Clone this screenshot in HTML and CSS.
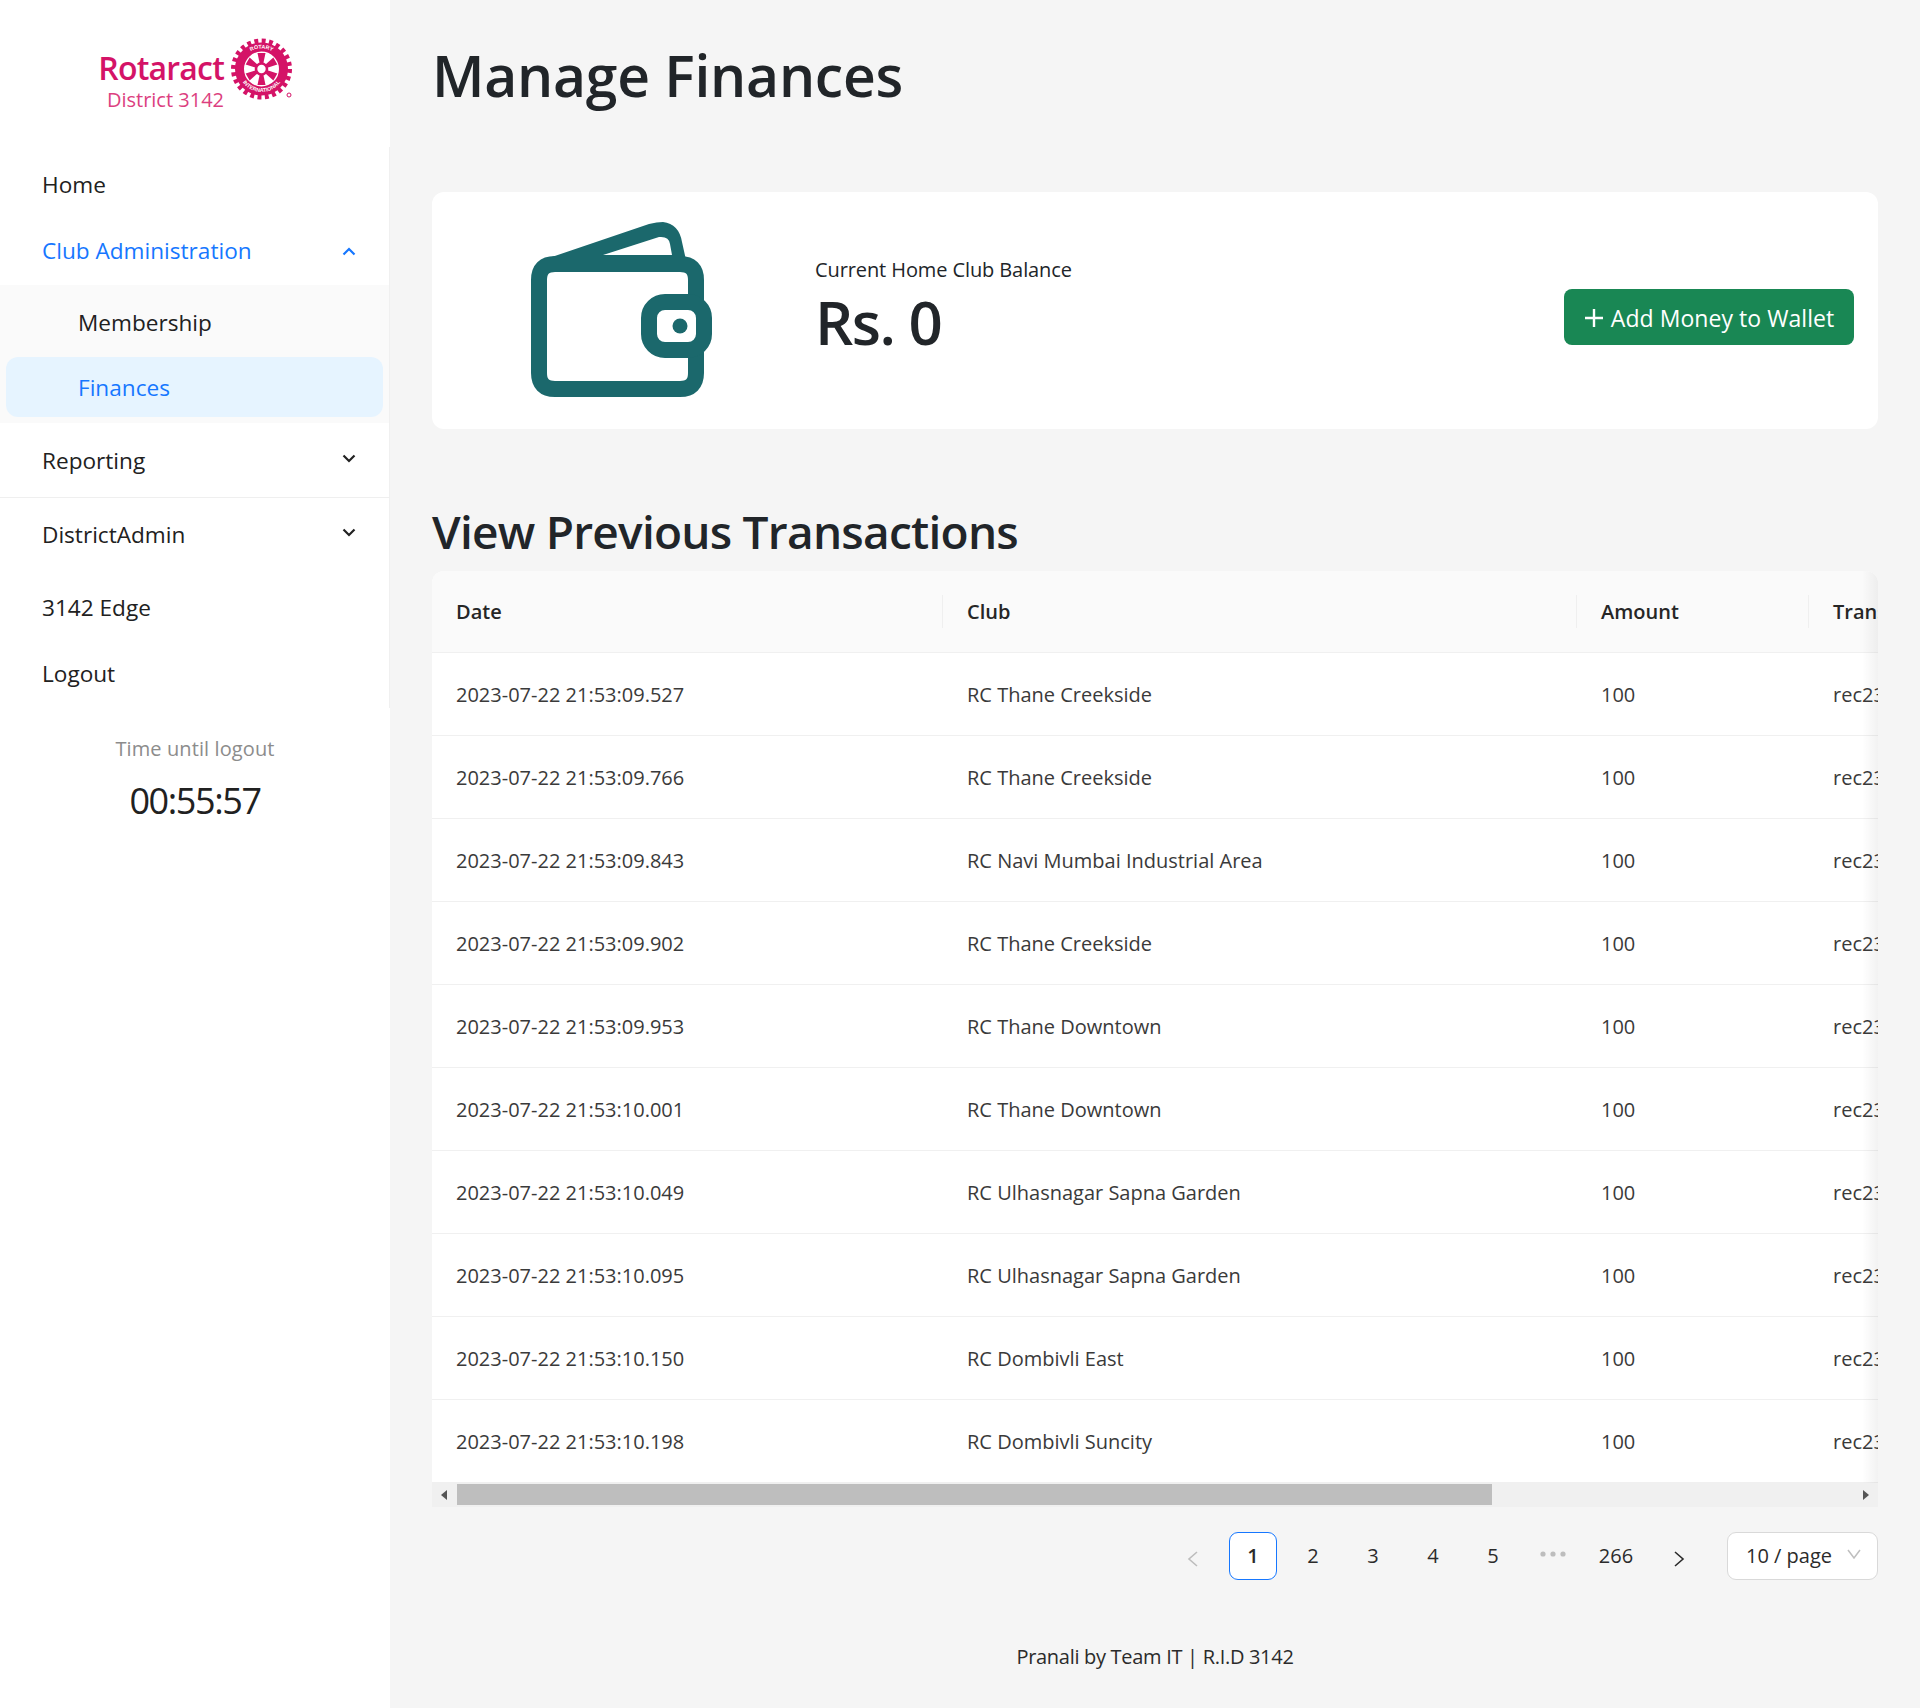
FILE: index.html
```html
<!DOCTYPE html>
<html lang="en">
<head>
  <meta charset="UTF-8" />
  <title>Manage Finances</title>
  <link rel="stylesheet" href="styles.css">
</head>
<body>
  <div class="layout">
    <aside class="sidebar">
      <div class="logo">
        <div class="logo-text">
          <div class="logo-name">Rotaract</div>
          <div class="logo-district">District 3142</div>
        </div>
        <svg class="logo-wheel" width="66" height="66" viewBox="0 0 66 66">
          <defs>
            <path id="arcTop" d="M11 31 A20.500 20.500 0 0 1 52 31"/>
            <path id="arcBottom" d="M8.500 31 A23 23 0 0 0 54.500 31"/>
          </defs>
          <circle cx="31.5" cy="31" r="28" fill="none" stroke="#d41367" stroke-width="5" stroke-dasharray="3.9 3.43"/>
          <circle cx="31.5" cy="31" r="22" fill="none" stroke="#d41367" stroke-width="9"/>
          <g fill="#d41367">
            <path id="spoke" d="M29.800 26 27.500 15H35.500L33.200 26Z"/>
            <path d="M29.800 26 27.500 15H35.500L33.200 26Z" transform="rotate(60 31.5 31)"/>
            <path d="M29.800 26 27.500 15H35.500L33.200 26Z" transform="rotate(120 31.5 31)"/>
            <path d="M29.800 26 27.500 15H35.500L33.200 26Z" transform="rotate(180 31.5 31)"/>
            <path d="M29.800 26 27.500 15H35.500L33.200 26Z" transform="rotate(240 31.5 31)"/>
            <path d="M29.800 26 27.500 15H35.500L33.200 26Z" transform="rotate(300 31.5 31)"/>
          </g>
          <circle cx="31.5" cy="31" r="5.5" fill="#fff" stroke="#d41367" stroke-width="2.6"/>
          <text class="wheel-text"><textPath href="#arcTop" startOffset="50%" text-anchor="middle">ROTARY</textPath></text>
          <text class="wheel-text"><textPath href="#arcBottom" startOffset="50%" text-anchor="middle">INTERNATIONAL</textPath></text>
          <circle cx="59" cy="57" r="2" fill="none" stroke="#d41367" stroke-width="1"/>
        </svg>
      </div>

      <nav class="menu">
        <a class="menu-item home-item">Home</a>
        <a class="menu-item open">Club Administration
          <svg class="chevron" width="14" height="9" viewBox="0 0 14 9"><path d="M1.5 7.5 7 2l5.5 5.5"/></svg>
        </a>
        <div class="submenu">
          <a class="menu-item sub-item">Membership</a>
          <a class="menu-item sub-item active">Finances</a>
        </div>
        <a class="menu-item reporting">Reporting
          <svg class="chevron" width="14" height="9" viewBox="0 0 14 9"><path d="M1.5 1.5 7 7l5.5-5.5"/></svg>
        </a>
        <div class="divider"></div>
        <a class="menu-item">DistrictAdmin
          <svg class="chevron" width="14" height="9" viewBox="0 0 14 9"><path d="M1.5 1.5 7 7l5.5-5.5"/></svg>
        </a>
        <a class="menu-item edge">3142 Edge</a>
        <a class="menu-item logout">Logout</a>
      </nav>

      <div class="timer">
        <div class="timer-label">Time until logout</div>
        <div class="timer-value">00:55:57</div>
      </div>
    </aside>

    <main class="content">
      <h1>Manage Finances</h1>

      <section class="balance-card">
        <svg class="wallet" width="190" height="182" viewBox="0 0 190 182">
          <path d="M12 38 118 2Q126 0 132 0 148 2 151 20L155 38Z" fill="#1b686c"/>
          <path d="M72 33 128 15Q138 14 139 22L141 33Z" fill="#fff"/>
          <path d="M165 80V58Q165 42 149 42H24Q8 42 8 58V151Q8 167 24 167H149Q165 167 165 151V130" fill="none" stroke="#1b686c" stroke-width="16"/>
          <rect x="118" y="80" width="55" height="48" rx="16" fill="#fff" stroke="#1b686c" stroke-width="16"/>
          <circle cx="149" cy="104" r="7.5" fill="#1b686c"/>
        </svg>
        <div class="balance">
          <div class="balance-label">Current Home Club Balance</div>
          <div class="balance-value">Rs. 0</div>
        </div>
        <button class="add-money" type="button">
          <svg width="20" height="20" viewBox="0 0 20 20"><path d="M10 1v18M1 10h18" stroke="#fff" stroke-width="2.4"/></svg>
          Add Money to Wallet
        </button>
      </section>

      <h2>View Previous Transactions</h2>

      <div class="table-wrap">
        <div class="table-clip">
          <table>
            <thead>
              <tr><th class="col-date">Date</th><th class="col-club">Club</th><th class="col-amount">Amount</th><th class="col-trans">Transaction</th></tr>
            </thead>
            <tbody>
              <tr><td>2023-07-22 21:53:09.527</td><td>RC Thane Creekside</td><td>100</td><td>rec23a81f</td></tr>
              <tr><td>2023-07-22 21:53:09.766</td><td>RC Thane Creekside</td><td>100</td><td>rec23a81f</td></tr>
              <tr><td>2023-07-22 21:53:09.843</td><td>RC Navi Mumbai Industrial Area</td><td>100</td><td>rec23a81f</td></tr>
              <tr><td>2023-07-22 21:53:09.902</td><td>RC Thane Creekside</td><td>100</td><td>rec23a81f</td></tr>
              <tr><td>2023-07-22 21:53:09.953</td><td>RC Thane Downtown</td><td>100</td><td>rec23a81f</td></tr>
              <tr><td>2023-07-22 21:53:10.001</td><td>RC Thane Downtown</td><td>100</td><td>rec23a81f</td></tr>
              <tr><td>2023-07-22 21:53:10.049</td><td>RC Ulhasnagar Sapna Garden</td><td>100</td><td>rec23a81f</td></tr>
              <tr><td>2023-07-22 21:53:10.095</td><td>RC Ulhasnagar Sapna Garden</td><td>100</td><td>rec23a81f</td></tr>
              <tr><td>2023-07-22 21:53:10.150</td><td>RC Dombivli East</td><td>100</td><td>rec23a81f</td></tr>
              <tr><td>2023-07-22 21:53:10.198</td><td>RC Dombivli Suncity</td><td>100</td><td>rec23a81f</td></tr>
            </tbody>
          </table>
          <div class="edge-shadow"></div>
        </div>
        <div class="scrollbar">
          <span class="arrow-left"></span>
          <span class="thumb"></span>
          <span class="arrow-right"></span>
        </div>
      </div>

      <div class="pagination">
        <span class="page-arrow disabled"><svg width="12" height="16" viewBox="0 0 12 16"><path d="M10 1 2 8l8 7"/></svg></span>
        <span class="page current">1</span>
        <span class="page">2</span>
        <span class="page">3</span>
        <span class="page">4</span>
        <span class="page">5</span>
        <span class="page dots"><svg width="26" height="6" viewBox="0 0 26 6"><circle cx="3" cy="3" r="2.6"/><circle cx="13" cy="3" r="2.6"/><circle cx="23" cy="3" r="2.6"/></svg></span>
        <span class="page wide">266</span>
        <span class="page-arrow next"><svg width="12" height="16" viewBox="0 0 12 16"><path d="M2 1l8 7-8 7"/></svg></span>
        <div class="page-size">10 / page
          <svg width="14" height="10" viewBox="0 0 14 10"><path d="M1 1l6 8 6-8"/></svg>
        </div>
      </div>

      <footer>Pranali by Team IT | R.I.D 3142</footer>
    </main>
  </div>
</body>
</html>
```

FILE: styles.css
```css
* {
  box-sizing: border-box;
}

body {
  margin: 0;
  font-family: "Open Sans", "Noto Sans", sans-serif;
  background: #f5f5f5;
  color: #212529;
}

.layout {
  display: flex;
  min-height: 1708px;
}

/* sidebar */
.sidebar {
  width: 390px;
  flex-shrink: 0;
  background: #fff;
}

.logo {
  height: 147px;
  padding: 39px 0 0 96px;
  display: flex;
  align-items: flex-start;
}

.logo-text {
  width: 135px;
  color: #d41367;
  text-align: right;
  padding-right: 7px;
}

.logo-name {
  font-size: 32px;
  font-weight: 600;
  line-height: 36px;
  margin-top: 11px;
  letter-spacing: -0.8px;
  white-space: nowrap;
}

.logo-district {
  font-size: 20px;
  line-height: 24px;
  margin-top: 2px;
  color: #dc3f80;
  white-space: nowrap;
}

.logo-wheel {
  margin: -1px 0 0 -1px;
}

.wheel-text {
  font-family: "Liberation Sans", sans-serif;
  font-size: 5.4px;
  font-weight: 700;
  fill: #fff;
}

.menu {
  border-right: 1px solid #f0f0f0;
  height: 561px;
  padding-top: 8px;
}

.menu-item {
  display: flex;
  align-items: center;
  justify-content: space-between;
  height: 60px;
  padding: 0 33px 2px 42px;
  margin-bottom: 6px;
  font-size: 22.6px;
  color: #212121;
}

.chevron {
  fill: none;
  stroke: #222;
  stroke-width: 2.2;
  margin-top: -4px;
}

.menu-item.open {
  color: #1677ff;
  margin-bottom: 4px;
}

.open .chevron {
  stroke: #1677ff;
  margin-top: 2px;
}

.submenu {
  background: #fafafa;
  padding: 8px 6px 6px;
  height: 138px;
}

.sub-item {
  padding-left: 72px;
  margin-bottom: 4px;
  border-radius: 12px;
}

.sub-item.active {
  background: #e6f4ff;
  color: #1677ff;
  padding-bottom: 0;
}

.menu-item.reporting {
  margin: 8px 0 6px;
}

.divider {
  height: 1px;
  background: #efefef;
  margin: 0 -1px 7px 0;
}

.menu-item.edge {
  margin-top: 13px;
}

.timer {
  text-align: center;
  padding-top: 25px;
}

.timer-label {
  font-size: 20px;
  line-height: 32px;
  letter-spacing: 0.1px;
  color: #8c8c8c;
}

.timer-value {
  font-size: 36px;
  line-height: 50px;
  margin-top: 11px;
  letter-spacing: -1.4px;
  color: #212121;
}

/* main column */
.content {
  flex: 1;
  padding: 0 42px;
  min-width: 0;
}

h1 {
  margin: 0;
  padding-top: 35px;
  height: 192px;
  font-size: 57px;
  line-height: 80px;
  font-weight: 600;
  letter-spacing: -0.25px;
}

.balance-card {
  height: 237px;
  background: #fff;
  border-radius: 12px;
  display: flex;
  align-items: center;
  padding: 0 24px 0 99px;
}

.wallet {
  margin-right: 94px;
  margin-top: 5px;
}

.balance {
  flex: 1;
  margin-top: -7px;
}

.balance-label {
  font-size: 20px;
  line-height: 32px;
  letter-spacing: -0.1px;
}

.balance-value {
  font-size: 60px;
  font-weight: 600;
  line-height: 76px;
  letter-spacing: -1.5px;
  margin-top: -2px;
}

.add-money {
  width: 290px;
  height: 56px;
  margin-top: 13px;
  padding: 2px 0 0;
  border: none;
  border-radius: 8px;
  background: #198754;
  color: #fff;
  font-family: inherit;
  font-size: 23px;
  letter-spacing: 0.05px;
  display: flex;
  align-items: center;
  justify-content: center;
  gap: 7px;
}

h2 {
  margin: 0;
  padding-top: 64px;
  height: 142px;
  font-size: 46px;
  line-height: 76px;
  font-weight: 600;
  letter-spacing: -0.75px;
}

.table-wrap {
  width: 1446px;
}

.table-clip {
  position: relative;
  overflow: hidden;
  border-radius: 12px 12px 0 0;
  background: #fff;
}

table {
  width: 1780px;
  table-layout: fixed;
  border-collapse: collapse;
  font-size: 20px;
}

.col-date { width: 511px; }
.col-club { width: 634px; }
.col-amount { width: 232px; }
.col-trans { width: 403px; }

th {
  position: relative;
  height: 81px;
  padding: 0 24px;
  text-align: left;
  background: #fafafa;
  font-weight: 600;
  color: #262626;
  border-bottom: 1px solid #f0f0f0;
}

th + th::before {
  content: "";
  position: absolute;
  left: -1px;
  top: 24px;
  width: 1px;
  height: 33px;
  background: #efefef;
}

td {
  height: 83px;
  padding: 1px 24px 0;
  color: #3a3a3a;
  border-bottom: 1px solid #f0f0f0;
  white-space: nowrap;
}

.edge-shadow {
  position: absolute;
  top: 0;
  right: 0;
  bottom: 0;
  width: 16px;
  background: linear-gradient(to left, rgba(0,0,0,0.05), rgba(0,0,0,0));
}

.scrollbar {
  height: 24px;
  background: #f0f0f0;
  display: flex;
  align-items: center;
  padding: 0 9px;
}

.arrow-left {
  width: 0;
  height: 0;
  border: 5px solid transparent;
  border-right: 6px solid #555;
  border-left: 0;
}

.thumb {
  width: 1035px;
  height: 21px;
  background: #bebebe;
  margin-left: 10px;
}

.arrow-right {
  width: 0;
  height: 0;
  border: 5px solid transparent;
  border-left: 6px solid #555;
  border-right: 0;
  margin-left: auto;
}

/* pagination */
.pagination {
  display: flex;
  justify-content: flex-end;
  align-items: center;
  margin-top: 25px;
  height: 48px;
  font-size: 20px;
  color: #2b2b2b;
}

.page {
  min-width: 48px;
  height: 48px;
  margin-right: 12px;
  border-radius: 9px;
  display: flex;
  align-items: center;
  justify-content: center;
}

.page.wide {
  min-width: 54px;
}

.page.current {
  background: #fff;
  border: 1.5px solid #1677ff;
  font-weight: 600;
}

.page.dots {
  padding-bottom: 4px;
}

.dots svg {
  fill: #bdbdbd;
}

.page-arrow {
  width: 48px;
  height: 48px;
  margin-right: 12px;
  display: flex;
  align-items: center;
  justify-content: center;
  padding-top: 6px;
}

.page-arrow.next {
  margin-right: 24px;
}

.page-arrow svg {
  fill: none;
  stroke: #2b2b2b;
  stroke-width: 1.6;
}

.page-arrow.disabled svg {
  stroke: #bdbdbd;
}

.page-size {
  width: 151px;
  height: 48px;
  padding: 0 16px 0 18px;
  background: #fff;
  border: 1.5px solid #d9d9d9;
  border-radius: 9px;
  display: flex;
  align-items: center;
  justify-content: space-between;
  white-space: nowrap;
}

.page-size svg {
  fill: none;
  stroke: #bfbfbf;
  stroke-width: 1.5;
  margin-top: -4px;
}

footer {
  margin-top: 61px;
  text-align: center;
  font-size: 20px;
  line-height: 32px;
  letter-spacing: -0.3px;
  color: #2b2b2b;
}
```
